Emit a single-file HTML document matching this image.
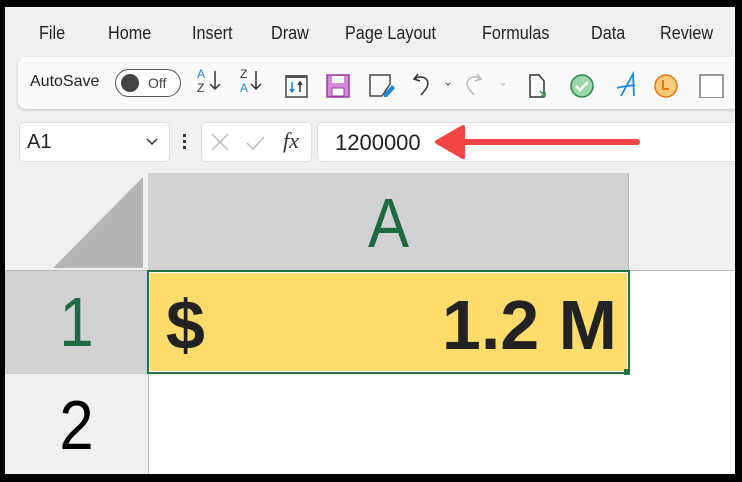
<!DOCTYPE html>
<html><head><style>
*{margin:0;padding:0;box-sizing:border-box}
body{width:742px;height:482px;background:#000;position:relative;overflow:hidden;font-family:"Liberation Sans",sans-serif}
#app{position:absolute;left:5px;top:7px;width:730px;height:467px;background:#f0f0f0;overflow:hidden}
.a{position:absolute}
.m{position:absolute;top:16px;font-size:18px;color:#222;transform:scaleX(0.9);transform-origin:left}
.big{position:absolute;font-size:70px;line-height:70px;transform:scaleX(0.88);transform-origin:center}
</style></head><body>
<div id="app">
<div class="m" style="left:34px">File</div>
<div class="m" style="left:103px">Home</div>
<div class="m" style="left:187px">Insert</div>
<div class="m" style="left:266px">Draw</div>
<div class="m" style="left:340px">Page Layout</div>
<div class="m" style="left:477px">Formulas</div>
<div class="m" style="left:586px">Data</div>
<div class="m" style="left:655px">Review</div>

<div class="a" style="left:13px;top:50px;width:740px;height:52px;background:#fafafa;border-radius:8px;box-shadow:0 1px 3px rgba(0,0,0,.2)"></div>
<div class="a" style="left:25px;top:66px;font-size:16px;color:#222">AutoSave</div>
<div class="a" style="left:110px;top:62px;width:66px;height:28px;border:1.5px solid #555;border-radius:14px;background:#fff"></div>
<div class="a" style="left:116px;top:67px;width:18px;height:18px;border-radius:50%;background:#444"></div>
<div class="a" style="left:143px;top:68px;font-size:14px;color:#444">Off</div>
<svg class="a" style="left:180px;top:55px" width="550" height="36" viewBox="185 60 550 36">
<g font-family="Liberation Sans" font-size="12" >
<text x="197" y="76" fill="#1e88d8">A</text><text x="197" y="90" fill="#333">Z</text>
<text x="240" y="76" fill="#333">Z</text><text x="240" y="90" fill="#1e88d8">A</text></g>
<path d="M215 69v18m-5-5 5 5 5-5M256 69v18m-5-5 5 5 5-5" stroke="#333" stroke-width="1.5" fill="none"/>
<rect x="286" y="74" width="21" height="21" fill="none" stroke="#444" stroke-width="1.5"/><rect x="286" y="73" width="21" height="3" fill="#555"/>
<path d="M292 80v10m-2-3 2 3 2-3" stroke="#1e88d8" stroke-width="1.5" fill="none"/><path d="M300 90v-10m-2 3 2-3 2 3" stroke="#333" stroke-width="1.5" fill="none"/>
<path d="M327 73h22v22h-22z" fill="#d08ad8" stroke="#9b3aa3" stroke-width="1.5"/><rect x="332" y="74" width="12" height="7" fill="#fff"/><rect x="332" y="86" width="12" height="8" fill="#fff" stroke="#9b3aa3"/>
<path d="M370 73h20v9l-8 12h-12z" fill="none" stroke="#444" stroke-width="1.5"/><path d="M384 92l8-9 3 3-8 9h-3z" fill="#1e88d8"/>
<path d="M418 72l-4 5 6 2M414 77c8-5 18 0 12 10l-5 6" stroke="#333" stroke-width="1.5" fill="none"/><path d="M446 81l2 2 2-2" stroke="#333" fill="none"/>
<path d="M477 72l4 5-6 2M481 77c-8-5-18 0-12 10l5 6" stroke="#bbb" stroke-width="1.5" fill="none"/><path d="M501 81l2 2 2-2" stroke="#bbb" fill="none"/>
<path d="M530 73h9l5 6v16h-14z" fill="none" stroke="#333" stroke-width="1.5"/><path d="M540 89l5 5m0-4v4h-4" stroke="#2a9a4a" stroke-width="1.5" fill="none"/>
<circle cx="582" cy="84" r="11" fill="#9bd8a8" stroke="#2a8a45" stroke-width="1.5"/><path d="M576 84l4 4 8-8" stroke="#fff" stroke-width="2.5" fill="none"/>
<path d="M621 94l12-22 1 22M617 86c6-2 12-2 18-3" stroke="#1e88d8" stroke-width="1.8" fill="none"/>
<circle cx="666" cy="84" r="11" fill="#fbc97a" stroke="#e07a10" stroke-width="1.5"/><path d="M663 78v9h6" stroke="#e07a10" stroke-width="2" fill="none"/>
<rect x="700" y="73" width="23" height="23" fill="#fff" stroke="#777" stroke-width="1.5"/>
</svg>

<div class="a" style="left:14px;top:115px;width:151px;height:40px;background:#fff;border:1px solid #ddd;border-radius:5px"></div>
<div class="a" style="left:22px;top:124px;font-size:20px;color:#222">A1</div>
<svg class="a" style="left:140px;top:130px" width="14" height="10"><path d="M2 2l5 5 5-5" stroke="#333" stroke-width="1.5" fill="none"/></svg>
<div class="a" style="left:178px;top:127px;width:3px;height:3px;background:#333;box-shadow:0 6px 0 #333,0 12px 0 #333"></div>
<div class="a" style="left:196px;top:115px;width:111px;height:40px;background:#fff;border:1px solid #ddd;border-radius:5px"></div>
<svg class="a" style="left:205px;top:125px" width="65" height="22"><path d="M2 2l16 16M18 2L2 18M37 11l6 6 11-12" stroke="#bbb" stroke-width="1.5" fill="none"/></svg>
<div class="a" style="left:278px;top:121px;font-family:'Liberation Serif',serif;font-style:italic;font-size:22px;color:#333">fx</div>
<div class="a" style="left:312px;top:115px;width:440px;height:40px;background:#fff;border:1px solid #ddd;border-radius:5px"></div>
<div class="a" style="left:330px;top:123px;font-size:22px;color:#222">1200000</div>
<svg class="a" style="left:420px;top:110px" width="230" height="50"><path d="M212 25H30" stroke="#f44444" stroke-width="6" stroke-linecap="round"/><path d="M38 10L12 25l26 15z" fill="#f44444" stroke="#f44444" stroke-width="4" stroke-linejoin="round"/></svg>

<div class="a" style="left:143px;top:166px;width:481px;height:97px;background:#d2d2d2;border-right:1px solid #bbb"></div>
<div class="a" style="left:0;top:263px;width:730px;height:1px;background:#bbb"></div>
<svg class="a" style="left:48px;top:170px" width="91" height="91"><path d="M90 0V91H0z" fill="#b4b4b4"/></svg>
<div class="big" style="left:143px;top:181px;width:481px;text-align:center;color:#1e6b42">A</div>
<div class="a" style="left:0;top:264px;width:143px;height:102px;background:#d2d2d2"></div>
<div class="big" style="left:0;top:280px;width:143px;text-align:center;color:#1e6b42">1</div>
<div class="a" style="left:143px;top:264px;width:587px;height:203px;background:#fff;border-left:1px solid #bbb"></div>
<div class="a" style="left:0;top:366px;width:143px;height:1px;background:#ccc"></div>
<div class="big" style="left:0;top:383px;width:143px;text-align:center;color:#000">2</div>
<div class="a" style="left:142px;top:263px;width:483px;height:104px;background:#fddc6c;border:2px solid #217346;box-shadow:inset 0 0 0 1px #fff"></div>
<div class="a" style="left:619px;top:362px;width:6px;height:6px;background:#217346"></div>
<div class="a" style="left:161px;top:278px;font-size:70px;line-height:80px;font-weight:bold;color:#222">$</div>
<div class="a" style="left:250px;top:278px;width:362px;text-align:right;font-size:70px;line-height:80px;font-weight:bold;color:#222">1.2 M</div>
</div>
</body></html>
